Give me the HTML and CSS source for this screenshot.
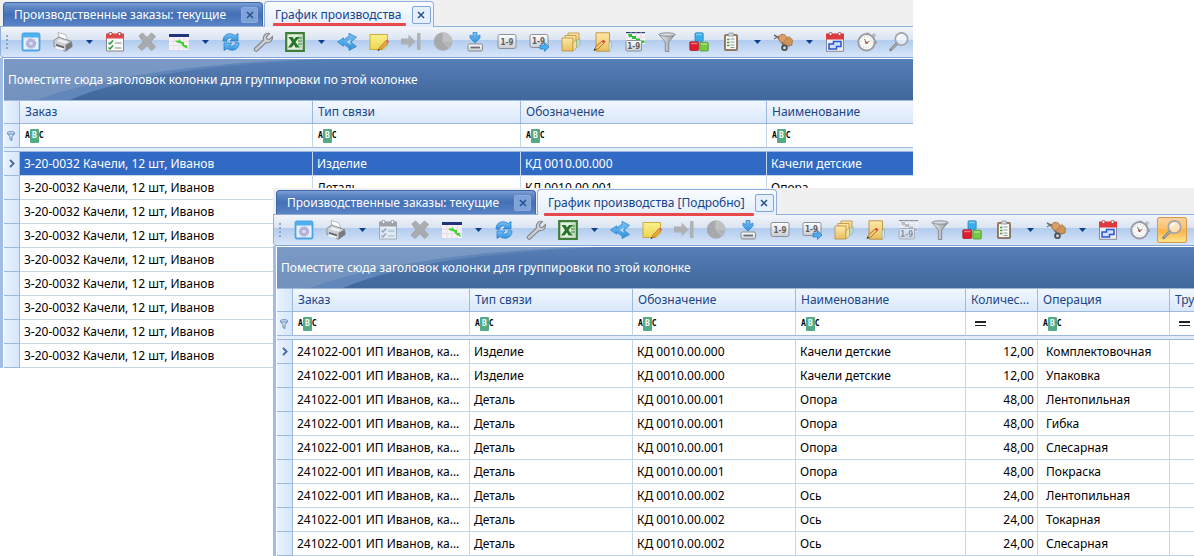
FILE: index.html
```html
<!DOCTYPE html>
<html lang="ru">
<head>
<meta charset="utf-8">
<title>График производства</title>
<link rel="stylesheet" href="styles.css">
</head>
<body>
<svg class="sprite" aria-hidden="true">
  <defs>
    <linearGradient id="g-blue" x1="0" y1="0" x2="0" y2="1"><stop offset="0" stop-color="#7cc4f4"/><stop offset="1" stop-color="#2f8fdc"/></linearGradient>
    <linearGradient id="g-yellow" x1="0" y1="0" x2="0" y2="1"><stop offset="0" stop-color="#fbf08a"/><stop offset="1" stop-color="#ecd552"/></linearGradient>
    <linearGradient id="g-folder" x1="0" y1="0" x2="0" y2="1"><stop offset="0" stop-color="#fde9a8"/><stop offset="1" stop-color="#e9bf60"/></linearGradient>
    <linearGradient id="g-metal" x1="0" y1="0" x2="1" y2="0"><stop offset="0" stop-color="#f4f4f4"/><stop offset="1" stop-color="#8d9095"/></linearGradient>
    <linearGradient id="g-light" x1="0" y1="0" x2="0" y2="1"><stop offset="0" stop-color="#ffffff"/><stop offset="1" stop-color="#c9cdd3"/></linearGradient>
    <linearGradient id="g-panel" x1="0" y1="0" x2="0" y2="1"><stop offset="0" stop-color="#7a99c5"/><stop offset="1" stop-color="#7391bd"/></linearGradient>
    <symbol id="i-window" viewBox="0 0 20 20">
      <rect x="1.500" y="1.500" width="17" height="17" rx="1.500" fill="#e6effa" stroke="#4ba3e6" stroke-width="1.800"/>
      <path d="M1.500 1.500h17v4h-17z" fill="#4fb0f0"/>
      <circle cx="10" cy="11.500" r="4.300" fill="#b4b1da"/><circle cx="10" cy="11.500" r="4.600" fill="none" stroke="#a3a0d0" stroke-width="1.200" stroke-dasharray="1.600 1"/>
      <circle cx="10" cy="11.500" r="1.800" fill="#dcdcf0"/>
    </symbol>
    <symbol id="i-printer" viewBox="0 0 20 20">
      <path d="M5 .5l7.500 2 2.500 6-8.500-2z" fill="#fdfdfd" stroke="#a9adb3" stroke-width=".8"/>
      <path d="M.8 8.500L5.500 5 18.500 9.500l.7 5-6.700 4.800L1 14.500z" fill="#cbced2" stroke="#7e8287" stroke-width=".8"/>
      <path d="M6 7l9 2.800-2.500 1.700-8.500-2.300z" fill="#eef0f2"/>
      <path d="M12.500 13l6-3.500.7 5-6.700 4.800z" fill="#77797d"/>
      <path d="M3 12l8 2.500v2L3 14z" fill="#606469"/>
      <path d="M3 14l8 2.500-1 2-8-2.500z" fill="#f6f6f6"/>
    </symbol>
    <symbol id="i-tasks" viewBox="0 0 20 20">
      <path d="M1.500 3h17v16h-17z" fill="#fafafa" stroke="#8c8484"/>
      <path d="M1 1.500h18V6.500H1z" fill="#e4474a"/>
      <g fill="#fff" stroke="#9b3033"><circle cx="5.500" cy="2" r="1.700"/><circle cx="14.500" cy="2" r="1.700"/></g>
      <path d="M3.500 10.500l1.500 1.500 3-3.500M3.500 15.500L5 17l3-3.500" fill="none" stroke="#2d9b3c" stroke-width="1.500"/>
      <path d="M10 11h6.500M10 16h6.500" stroke="#a8b8a8" stroke-width="1.300"/>
    </symbol>
    <symbol id="i-cross" viewBox="0 0 20 20">
      <path d="M5.500 1L10 5.500 14.500 1 18.500 4.500 13.800 9.800 18.500 15 14.500 18.500 10 13.500 5 18.500 1 15 6 9.800 2 4z" fill="#a5a7ab" stroke="#9b9da1" stroke-linejoin="round"/>
    </symbol>
    <symbol id="i-gantt" viewBox="0 0 20 20">
      <path d="M0 2h20v16H0z" fill="#f5f1f6"/><path d="M0 2h20v3H0z" fill="#20347e"/>
      <path d="M0 9.500h20M0 13.500h20M5 5v13M10 5v13M15 5v13" stroke="#e6d9e2" stroke-width=".8"/>
      <path d="M6 8.500h4V7l3 3h2v3h2.500l1.500 4-5-2.500-2-3-4-1z" fill="#42d234"/>
    </symbol>
    <symbol id="i-refresh" viewBox="0 0 20 20">
      <path d="M2 9C2 2 9 0 14 3.500L17 1.500V9H9l2.500-2.500C8.500 5 6 6.500 5.500 9.500z" fill="url(#g-blue)" stroke="#2a80cc" stroke-width=".8"/>
      <path d="M18 11c0 7-7 9-12 5.500L3 18.500V11H11l-2.500 2.500c3 1.500 5.500 0 6-3z" fill="url(#g-blue)" stroke="#2a80cc" stroke-width=".8"/>
    </symbol>
    <symbol id="i-wrench" viewBox="0 0 20 20">
      <path d="M1.500 16.500L10.500 8c-1-4 2-7.500 6-6.500L13.500 4.500l.5 2.500 2.500.5 3-3c.5 4-3 7-6.500 6L4 19c-1.500 1-3.500-1-2.500-2.500z" fill="#cdd0d5" stroke="#83868c" stroke-width="1.100"/>
    </symbol>
    <symbol id="i-excel" viewBox="0 0 20 20">
      <path d="M1.200 1.200h17.600v17.600H1.200z" fill="#e4f0e0" stroke="#3f7f3a" stroke-width="2.200"/>
      <path d="M13 3.500h4v13h-4z" fill="#b8dab4"/><path d="M13 6h4M13 9h4M13 12h4" stroke="#4a8f46"/>
      <path d="M3.500 5h4L9 7.500 11 5h3.500l-4 5 4 5.500h-4L9 12.500 6.500 15.500H3l4-5.500z" fill="#25742a"/>
    </symbol>
    <symbol id="i-share" viewBox="0 0 20 20">
      <path d="M.5 10l6-4.200V8l5.500-3.800V1.300l7.500 4-5.500 4.700 5.500 4.500-7.500 4V16l-5.500-4v2.200z" fill="url(#g-blue)" stroke="#3288cf" stroke-width=".8"/>
      <path d="M9.500 10L14 7.300l-1 2.700 1 2.700z" fill="#bcd8f2"/>
    </symbol>
    <symbol id="i-note" viewBox="0 0 20 20">
      <path d="M1 2.500h17.500V13l-4.500 4.500H1z" fill="url(#g-yellow)" stroke="#c3a834" stroke-width=".9"/>
      <path d="M9 18.500l2-3.500 6-6.500 2 2-6.500 6.500z" fill="#f0a94a" stroke="#a8661f" stroke-width=".7"/><path d="M17 8.500l1-1 2 2-1 1z" fill="#e25560"/><path d="M8.500 19l1-2 1.200 1z" fill="#333"/>
    </symbol>
    <symbol id="i-next" viewBox="0 0 20 20">
      <path d="M0 6.500h7.500V2.500l7 7-7 7v-4H0zM16 1h3.500v17H16z" fill="#abadb1"/>
    </symbol>
    <symbol id="i-pie" viewBox="0 0 20 20">
      <circle cx="10" cy="9.500" r="9.300" fill="#a3a5a9"/><path d="M10 9.500V.5a9 9 0 0 1 9 9z" fill="#bcbec2"/><path d="M10 9.500h9a9 9 0 0 1-3 6.500z" fill="#b0b2b6"/><path d="M10 .5v9h9M10 9.500l6 6.500" fill="none" stroke="#c6c8cc" stroke-width=".7"/>
    </symbol>
    <symbol id="i-import" viewBox="0 0 20 20">
      <path d="M8 .5h4v4l3-1.500v3l-5 5-5-5V3l3 1.500z" fill="url(#g-blue)" stroke="#2a80cc" stroke-width=".7"/>
      <rect x="3" y="12" width="14.500" height="7" rx="1.500" fill="url(#g-light)" stroke="#858a91"/><path d="M5.500 15.500h9.500" stroke="#6b6f75" stroke-width="1.800"/>
    </symbol>
    <symbol id="i-num" viewBox="0 0 20 20">
      <rect x="1" y="2.500" width="18" height="14" rx="1.800" fill="url(#g-light)" stroke="#8d9299"/>
      <text x="10" y="12.500" class="num-label">1-9</text>
    </symbol>
    <symbol id="i-num-go" viewBox="0 0 20 20">
      <rect x="1" y="2.500" width="18" height="13" rx="1.800" fill="url(#g-light)" stroke="#8d9299"/>
      <text x="9.500" y="12" class="num-label">1-9</text>
      <path d="M11 13h4.500v-2.500L20 15l-4.500 4.500V17H11z" fill="#4aaef0" stroke="#2878bd" stroke-width=".7"/>
    </symbol>
    <symbol id="i-folders" viewBox="0 0 20 20">
      <g fill="url(#g-folder)" stroke="#b98e3b" stroke-width=".8"><path d="M7 1h11v11H7z"/><path d="M4 3.500h11V15H4z"/><path d="M1 6h11v13H1z"/></g>
      <path d="M12 10.500l3.500-2.500v7.500L12 19z" fill="#f2e0a0" stroke="#b98e3b" stroke-width=".6"/><path d="M15.500 8.500L19 6.500v6.500l-3.500 3z" fill="#b8dcd0" stroke="#90a676" stroke-width=".5"/>
    </symbol>
    <symbol id="i-folder-edit" viewBox="0 0 20 20">
      <path d="M3 .8h13.500v18.400H3z" fill="url(#g-folder)" stroke="#b98e3b" stroke-width=".9"/>
      <path d="M16 10.500l2.500-1v7L16 19z" fill="#cfe9e3" stroke="#8fa89f" stroke-width=".6"/>
      <path d="M1.500 17.500l1.500-3 6-5.500 2 2-6 6z" fill="#f6c46a" stroke="#8b5a1f" stroke-width=".7"/><path d="M8.800 9l1.700-1.300 2 2L11 11.200z" fill="#e0433e"/><path d="M.5 19l1-2.500 1.700 1.500z" fill="#333"/>
    </symbol>
    <symbol id="i-gantt-num" viewBox="0 0 20 20">
      <path d="M1 0h19v12H1z" fill="#fbf6fb"/><path d="M1 0h19v1.200H1z" fill="#27406b"/>
      <path d="M1 5h19M6 0v8M11 0v8M16 0v12" stroke="#dfcbdc" stroke-width=".7"/>
      <path d="M3 2h4v2h4v2.500h4v2h4.500V11h-4.500V9h-4V7H7V5H4z" fill="#24c42e"/>
      <rect x="1" y="8.500" width="15.500" height="10.500" rx="1" fill="url(#g-light)" stroke="#8d9299"/>
      <text x="8.700" y="16.500" class="num-label">1-9</text>
    </symbol>
    <symbol id="i-funnel" viewBox="0 0 20 20">
      <path d="M2 2.500L8.300 10v9.500h3.400V10L18 2.500z" fill="url(#g-metal)" stroke="#777b81" stroke-width=".8"/><ellipse cx="10" cy="2.500" rx="8" ry="1.700" fill="#d8dade" stroke="#777b81" stroke-width=".8"/>
    </symbol>
    <symbol id="i-cubes" viewBox="0 0 20 20">
      <rect x="6" y=".8" width="8.200" height="8.500" rx="1" fill="#38aeea" stroke="#1c7eb9" stroke-width=".7"/>
      <rect x=".8" y="9.800" width="8.800" height="8.700" rx="1" fill="#dd1e2d" stroke="#a30f1c" stroke-width=".7"/>
      <rect x="10.800" y="10.300" width="8.500" height="8.700" rx="1" fill="#75cb42" stroke="#468f22" stroke-width=".7"/>
      <path d="M7 2.500h6M2 11.500h6.500M12 12h6" stroke="#fff" stroke-opacity=".4" stroke-width="1.400"/>
    </symbol>
    <symbol id="i-clipboard" viewBox="0 0 20 20">
      <rect x="3.500" y="2.500" width="13" height="16" rx="1" fill="#9b7c5f" stroke="#715439" stroke-width=".6"/><path d="M5 4h10v13H5z" fill="#f8faf7"/>
      <path d="M7 4L8 1h4l1 3z" fill="#d5d7d9" stroke="#84878a" stroke-width=".7"/>
      <path d="M6 7.500h2.500M6 10.500h2.500M6 13.500h2.500" stroke="#4a9a4c" stroke-width="1.600"/><path d="M9.500 7h4M9.500 10h4M9.500 13h4M9.500 15.500h4" stroke="#90989c"/>
    </symbol>
    <symbol id="i-cart" viewBox="0 0 20 20">
      <path d="M1 3l3.500 2 7 9" fill="none" stroke="#6d6f72" stroke-width="1.600"/><path d="M1 7l5-3" stroke="#6d6f72" stroke-width="1.200"/>
      <ellipse cx="10" cy="6.500" rx="4.500" ry="4" transform="rotate(35 10 6.500)" fill="#dba066" stroke="#9c6a38" stroke-width=".7"/>
      <path d="M10 10.500l6-6 3.500 3.500-.5 5-5 1.500z" fill="#cf9458" stroke="#9c6a38" stroke-width=".7"/>
      <circle cx="11.500" cy="15.800" r="3.300" fill="#4c4e50"/><circle cx="11.500" cy="15.800" r="1.500" fill="#d3d5d7"/><path d="M14 15l3-2" stroke="#888" stroke-width="1.500"/>
    </symbol>
    <symbol id="i-calendar" viewBox="0 0 20 20">
      <path d="M1.500 3h17v16.300h-17z" fill="#eceef6" stroke="#8a8a9c"/><path d="M1 1.500h18v6H1z" fill="#e2393c"/>
      <g fill="#fff" stroke="#9b3033" stroke-width=".8"><circle cx="5.500" cy="2" r="1.600"/><circle cx="14.500" cy="2" r="1.600"/></g>
      <path d="M4 12h4.500V9.500H16v5h-4.500V17H4z" fill="#d2defd" stroke="#2858cc" stroke-width="1.500"/>
    </symbol>
    <symbol id="i-stopwatch" viewBox="0 0 20 20">
      <path d="M14 4l2.500-3 3 2-2.500 3z" fill="#b9bcc1"/><path d="M9 1.500h3M19 9v3" stroke="#999" stroke-width="1.500"/>
      <circle cx="9.500" cy="10.300" r="8.200" fill="#f9f9f8" stroke="#9b9ea3" stroke-width="2"/>
      <circle cx="9.500" cy="10.300" r="5.500" fill="none" stroke="#aaa" stroke-dasharray=".6 2.300"/>
      <path d="M9.500 11.500l-2-4.500M9.500 11l3-2" stroke="#666" stroke-width=".9"/><circle cx="9.500" cy="10.700" r="1.300" fill="#b65252"/>
    </symbol>
    <symbol id="i-search" viewBox="0 0 20 20">
      <path d="M8 11.500L1.700 17.800" stroke="#83868b" stroke-width="3" stroke-linecap="round"/><path d="M7.500 12L2 17.500" stroke="#c8cace"/>
      <circle cx="12.500" cy="7" r="6.200" fill="#fff" fill-opacity=".55" stroke="#a1a5ab" stroke-width="1.700"/><path d="M9 6.500a4 4 0 0 1 3.500-3" stroke="#fff" stroke-width="1.300" fill="none"/>
    </symbol>
    <symbol id="i-caret" viewBox="0 0 7 4"><path d="M0 0h7L3.500 4z" fill="#0f3f8c"/></symbol>
    <symbol id="i-close" viewBox="0 0 8 8"><path d="M1 1l6 6M7 1L1 7" stroke="currentColor" stroke-width="1.500"/></symbol>
    <symbol id="i-filter" viewBox="0 0 8 10"><path d="M.5 1.500v1L3 5.500v3L5 9.500v-4l2.500-3v-1c0-1-7-1-7 0zm0 1.500h7" fill="none" stroke="#6385b5"/></symbol>
    <symbol id="i-row" viewBox="0 0 6 9"><path d="M1 .8l3.600 3.700L1 8.200" fill="none" stroke="#46699f" stroke-width="1.900"/></symbol>
    <symbol id="i-swoosh" viewBox="0 0 320 41">
      <path d="M0 0h320C235 5 135 12 66 41H0z" fill="#6086ba"/>
      <path d="M0 0h320C225 2 105 14 33 41H0z" fill="url(#g-panel)"/>
    </symbol>
  </defs>
</svg>

<main class="desktop">
  <section class="window window-back" aria-label="График производства">
    <nav class="tabs">
      <div class="tab"><button class="tab-title">Производственные заказы: текущие</button><button class="tab-close" aria-label="Закрыть"><svg><use href="#i-close"/></svg></button></div>
      <div class="tab tab-active"><button class="tab-title marked">График производства</button><button class="tab-close" aria-label="Закрыть"><svg><use href="#i-close"/></svg></button></div>
    </nav>
    <div class="toolbar" role="toolbar">
      <span class="grip"></span>
      <button class="tool" aria-label="Окно"><svg><use href="#i-window"/></svg></button>
      <button class="tool" aria-label="Печать"><svg><use href="#i-printer"/></svg></button>
      <button class="drop" aria-label="Параметры печати"><svg><use href="#i-caret"/></svg></button>
      <button class="tool" aria-label="Задачи"><svg><use href="#i-tasks"/></svg></button>
      <button class="tool" aria-label="Удалить" disabled><svg><use href="#i-cross"/></svg></button>
      <button class="tool" aria-label="Диаграмма"><svg><use href="#i-gantt"/></svg></button>
      <button class="drop" aria-label="Виды диаграммы"><svg><use href="#i-caret"/></svg></button>
      <button class="tool" aria-label="Обновить"><svg><use href="#i-refresh"/></svg></button>
      <button class="tool" aria-label="Настройка"><svg><use href="#i-wrench"/></svg></button>
      <button class="tool" aria-label="Excel"><svg><use href="#i-excel"/></svg></button>
      <button class="drop" aria-label="Варианты экспорта"><svg><use href="#i-caret"/></svg></button>
      <button class="tool" aria-label="Связи"><svg><use href="#i-share"/></svg></button>
      <button class="tool" aria-label="Заметка"><svg><use href="#i-note"/></svg></button>
      <button class="tool" aria-label="Далее" disabled><svg><use href="#i-next"/></svg></button>
      <button class="tool" aria-label="Доля" disabled><svg><use href="#i-pie"/></svg></button>
      <button class="tool" aria-label="Загрузить"><svg><use href="#i-import"/></svg></button>
      <button class="tool" aria-label="Нумерация"><svg><use href="#i-num"/></svg></button>
      <button class="tool" aria-label="Перенумеровать"><svg><use href="#i-num-go"/></svg></button>
      <button class="tool" aria-label="Папки"><svg><use href="#i-folders"/></svg></button>
      <button class="tool" aria-label="Изменить папку"><svg><use href="#i-folder-edit"/></svg></button>
      <button class="tool" aria-label="Номера на диаграмме"><svg><use href="#i-gantt-num"/></svg></button>
      <button class="tool" aria-label="Фильтр"><svg><use href="#i-funnel"/></svg></button>
      <button class="tool" aria-label="Состав"><svg><use href="#i-cubes"/></svg></button>
      <button class="tool" aria-label="Список"><svg><use href="#i-clipboard"/></svg></button>
      <button class="drop" aria-label="Варианты списка"><svg><use href="#i-caret"/></svg></button>
      <button class="tool" aria-label="Материалы"><svg><use href="#i-cart"/></svg></button>
      <button class="drop" aria-label="Варианты материалов"><svg><use href="#i-caret"/></svg></button>
      <button class="tool" aria-label="Календарь"><svg><use href="#i-calendar"/></svg></button>
      <button class="tool" aria-label="Время"><svg><use href="#i-stopwatch"/></svg></button>
      <button class="tool" aria-label="Поиск"><svg><use href="#i-search"/></svg></button>
    </div>
    <div class="grid">
      <div class="group-panel"><svg class="swoosh"><use href="#i-swoosh"/></svg><span>Поместите сюда заголовок колонки для группировки по этой колонке</span></div>
      <table>
        <colgroup><col class="c-mark"><col class="c-293"><col class="c-208"><col class="c-246"><col></colgroup>
        <thead>
          <tr><th></th><th>Заказ</th><th>Тип связи</th><th>Обозначение</th><th>Наименование</th></tr>
          <tr class="filters"><td><svg class="filter-icon"><use href="#i-filter"/></svg></td><td><button class="abc">A<b>B</b>C</button></td><td><button class="abc">A<b>B</b>C</button></td><td><button class="abc">A<b>B</b>C</button></td><td><button class="abc">A<b>B</b>C</button></td></tr>
          <tr class="divider"><td colspan="5"></td></tr>
        </thead>
        <tbody>
          <tr class="selected"><td><svg class="row-icon"><use href="#i-row"/></svg></td><td>3-20-0032 Качели, 12 шт, Иванов</td><td>Изделие</td><td>КД 0010.00.000</td><td>Качели детские</td></tr>
          <tr><td></td><td>3-20-0032 Качели, 12 шт, Иванов</td><td>Деталь</td><td>КД 0010.00.001</td><td>Опора</td></tr>
          <tr><td></td><td>3-20-0032 Качели, 12 шт, Иванов</td><td></td><td></td><td></td></tr>
          <tr><td></td><td>3-20-0032 Качели, 12 шт, Иванов</td><td></td><td></td><td></td></tr>
          <tr><td></td><td>3-20-0032 Качели, 12 шт, Иванов</td><td></td><td></td><td></td></tr>
          <tr><td></td><td>3-20-0032 Качели, 12 шт, Иванов</td><td></td><td></td><td></td></tr>
          <tr><td></td><td>3-20-0032 Качели, 12 шт, Иванов</td><td></td><td></td><td></td></tr>
          <tr><td></td><td>3-20-0032 Качели, 12 шт, Иванов</td><td></td><td></td><td></td></tr>
          <tr><td></td><td>3-20-0032 Качели, 12 шт, Иванов</td><td></td><td></td><td></td></tr>
        </tbody>
      </table>
    </div>
  </section>

  <section class="window window-front" aria-label="График производства [Подробно]">
    <nav class="tabs">
      <div class="tab"><button class="tab-title">Производственные заказы: текущие</button><button class="tab-close" aria-label="Закрыть"><svg><use href="#i-close"/></svg></button></div>
      <div class="tab tab-active"><button class="tab-title marked marked-low">График производства [Подробно]</button><button class="tab-close" aria-label="Закрыть"><svg><use href="#i-close"/></svg></button></div>
    </nav>
    <div class="toolbar" role="toolbar">
      <span class="grip"></span>
      <button class="tool" aria-label="Окно"><svg><use href="#i-window"/></svg></button>
      <button class="tool" aria-label="Печать"><svg><use href="#i-printer"/></svg></button>
      <button class="drop" aria-label="Параметры печати"><svg><use href="#i-caret"/></svg></button>
      <button class="tool" aria-label="Задачи" disabled><svg><use href="#i-tasks"/></svg></button>
      <button class="tool" aria-label="Удалить" disabled><svg><use href="#i-cross"/></svg></button>
      <button class="tool" aria-label="Диаграмма"><svg><use href="#i-gantt"/></svg></button>
      <button class="drop" aria-label="Виды диаграммы"><svg><use href="#i-caret"/></svg></button>
      <button class="tool" aria-label="Обновить"><svg><use href="#i-refresh"/></svg></button>
      <button class="tool" aria-label="Настройка"><svg><use href="#i-wrench"/></svg></button>
      <button class="tool" aria-label="Excel"><svg><use href="#i-excel"/></svg></button>
      <button class="drop" aria-label="Варианты экспорта"><svg><use href="#i-caret"/></svg></button>
      <button class="tool" aria-label="Связи"><svg><use href="#i-share"/></svg></button>
      <button class="tool" aria-label="Заметка"><svg><use href="#i-note"/></svg></button>
      <button class="tool" aria-label="Далее" disabled><svg><use href="#i-next"/></svg></button>
      <button class="tool" aria-label="Доля" disabled><svg><use href="#i-pie"/></svg></button>
      <button class="tool" aria-label="Загрузить"><svg><use href="#i-import"/></svg></button>
      <button class="tool" aria-label="Нумерация"><svg><use href="#i-num"/></svg></button>
      <button class="tool" aria-label="Перенумеровать"><svg><use href="#i-num-go"/></svg></button>
      <button class="tool" aria-label="Папки"><svg><use href="#i-folders"/></svg></button>
      <button class="tool" aria-label="Изменить папку"><svg><use href="#i-folder-edit"/></svg></button>
      <button class="tool" aria-label="Номера на диаграмме" disabled><svg><use href="#i-gantt-num"/></svg></button>
      <button class="tool" aria-label="Фильтр"><svg><use href="#i-funnel"/></svg></button>
      <button class="tool" aria-label="Состав"><svg><use href="#i-cubes"/></svg></button>
      <button class="tool" aria-label="Список"><svg><use href="#i-clipboard"/></svg></button>
      <button class="drop" aria-label="Варианты списка"><svg><use href="#i-caret"/></svg></button>
      <button class="tool" aria-label="Материалы"><svg><use href="#i-cart"/></svg></button>
      <button class="drop" aria-label="Варианты материалов"><svg><use href="#i-caret"/></svg></button>
      <button class="tool" aria-label="Календарь"><svg><use href="#i-calendar"/></svg></button>
      <button class="tool" aria-label="Время"><svg><use href="#i-stopwatch"/></svg></button>
      <button class="tool tool-on" aria-label="Поиск" aria-pressed="true"><svg><use href="#i-search"/></svg></button>
    </div>
    <div class="grid">
      <div class="group-panel"><svg class="swoosh"><use href="#i-swoosh"/></svg><span>Поместите сюда заголовок колонки для группировки по этой колонке</span></div>
      <table>
        <colgroup><col class="c-mark"><col class="c-177"><col class="c-163"><col class="c-163"><col class="c-170"><col class="c-72"><col class="c-132"><col></colgroup>
        <thead>
          <tr><th></th><th>Заказ</th><th>Тип связи</th><th>Обозначение</th><th>Наименование</th><th>Количес...</th><th>Операция</th><th class="cut">Тру</th></tr>
          <tr class="filters"><td><svg class="filter-icon"><use href="#i-filter"/></svg></td><td><button class="abc">A<b>B</b>C</button></td><td><button class="abc">A<b>B</b>C</button></td><td><button class="abc">A<b>B</b>C</button></td><td><button class="abc">A<b>B</b>C</button></td><td><button class="equals" aria-label="Равно"></button></td><td><button class="abc">A<b>B</b>C</button></td><td><button class="equals" aria-label="Равно"></button></td></tr>
          <tr class="divider"><td colspan="8"></td></tr>
        </thead>
        <tbody>
          <tr><td><svg class="row-icon"><use href="#i-row"/></svg></td><td>241022-001 ИП Иванов, ка...</td><td>Изделие</td><td>КД 0010.00.000</td><td>Качели детские</td><td class="qty">12,00</td><td class="op">Комплектовочная</td><td></td></tr>
          <tr><td></td><td>241022-001 ИП Иванов, ка...</td><td>Изделие</td><td>КД 0010.00.000</td><td>Качели детские</td><td class="qty">12,00</td><td class="op">Упаковка</td><td></td></tr>
          <tr><td></td><td>241022-001 ИП Иванов, ка...</td><td>Деталь</td><td>КД 0010.00.001</td><td>Опора</td><td class="qty">48,00</td><td class="op">Лентопильная</td><td></td></tr>
          <tr><td></td><td>241022-001 ИП Иванов, ка...</td><td>Деталь</td><td>КД 0010.00.001</td><td>Опора</td><td class="qty">48,00</td><td class="op">Гибка</td><td></td></tr>
          <tr><td></td><td>241022-001 ИП Иванов, ка...</td><td>Деталь</td><td>КД 0010.00.001</td><td>Опора</td><td class="qty">48,00</td><td class="op">Слесарная</td><td></td></tr>
          <tr><td></td><td>241022-001 ИП Иванов, ка...</td><td>Деталь</td><td>КД 0010.00.001</td><td>Опора</td><td class="qty">48,00</td><td class="op">Покраска</td><td></td></tr>
          <tr><td></td><td>241022-001 ИП Иванов, ка...</td><td>Деталь</td><td>КД 0010.00.002</td><td>Ось</td><td class="qty">24,00</td><td class="op">Лентопильная</td><td></td></tr>
          <tr><td></td><td>241022-001 ИП Иванов, ка...</td><td>Деталь</td><td>КД 0010.00.002</td><td>Ось</td><td class="qty">24,00</td><td class="op">Токарная</td><td></td></tr>
          <tr><td></td><td>241022-001 ИП Иванов, ка...</td><td>Деталь</td><td>КД 0010.00.002</td><td>Ось</td><td class="qty">24,00</td><td class="op">Слесарная</td><td></td></tr>
        </tbody>
      </table>
    </div>
  </section>
</main>
</body>
</html>
```
FILE: styles.css
```css
* { box-sizing: border-box; }

body {
  margin: 0;
  background: #fff;
  color: #000;
  font: 12px/16px "Noto Sans", "Open Sans", sans-serif;
}

button {
  margin: 0;
  padding: 0;
  border: 0;
  background: none;
  color: inherit;
  font: inherit;
}

svg { display: block; }

.sprite {
  position: absolute;
  width: 0;
  height: 0;
}

/* Overlapping windows on the desktop */
.desktop {
  position: relative;
  min-height: 100vh;
  overflow: hidden;
}

.window {
  position: absolute;
  background: #fff;
  overflow: hidden;
}

.window-back {
  top: 0;
  left: 0;
  right: 281px;
}

.window-front {
  top: 188px;
  left: 273px;
  right: 0;
}

/* Tabs */
.tabs {
  display: flex;
  align-items: flex-end;
  gap: 1px;
  height: 27px;
  padding-left: 3px;
  background: #f0f0f0;
  border-bottom: 1px solid #8fb0dc;
}

.tab {
  display: flex;
  align-items: center;
  justify-content: space-between;
  gap: 10px;
  min-width: 260px;
  height: 24px;
  padding: 0 4px 0 10px;
  border: 1px solid #3c66a8;
  border-bottom: 0;
  border-radius: 4px 4px 0 0;
  background: linear-gradient(#7d9fd4, #5c84c3 20%, #4470b5 50%, #5a84c6);
  color: #fff;
}

.tab-active {
  position: relative;
  min-width: 0;
  height: 26px;
  margin-bottom: -1px;
  padding: 0 2px 0 10px;
  border-color: #8fb0dc;
  background: linear-gradient(#fafcff, #e3eefc);
  color: #15428b;
}

.tab-close {
  display: flex;
  align-items: center;
  justify-content: center;
  width: 17px;
  height: 16px;
  border: 1px solid #8aabdb;
  border-radius: 2px;
  background: #7fa3d8;
  color: #24508f;
}

.tab-active .tab-close {
  width: 19px;
  height: 18px;
  background: #e6f0fd;
  border-color: #84a4d4;
}

.tab-close svg { width: 8px; height: 8px; }

.marked { position: relative; }

.marked::after {
  content: "";
  position: absolute;
  left: -2px;
  right: -4px;
  bottom: -3px;
  height: 3px;
  border-radius: 1px;
  background: #e9484d;
}

.marked-low::after {
  left: -4px;
  right: -9px;
  bottom: -5px;
}

/* Toolbar */
.toolbar {
  display: flex;
  align-items: center;
  height: 31px;
  padding-left: 5px;
  border-left: 1px solid #8fb0dc;
  border-bottom: 1px solid #7fa3d4;
  border-radius: 0 0 0 4px;
  background: linear-gradient(#f3f5f9, #dae4f2 42%, #b2ccee 44%, #d8e6f9);
}

.grip {
  flex: none;
  width: 2px;
  height: 15px;
  margin-right: 7px;
  background: repeating-linear-gradient(#8fa7cb 0 2px, transparent 2px 4px);
}

.tool, .drop {
  flex: none;
  display: flex;
  align-items: center;
  justify-content: center;
  width: 32px;
  height: 26px;
}

.tool svg { width: 20px; height: 20px; }
.drop { width: 20px; }
.drop svg { width: 7px; height: 4px; }
.tool:disabled svg { filter: grayscale(1); opacity: .9; }
.tool:disabled use[href="#i-tasks"], .tool:disabled use[href="#i-gantt-num"] { opacity: .6; }

.tool-on {
  width: 30px;
  margin: 0 1px;
  border: 1px solid #d59a4c;
  border-radius: 2px;
  background: linear-gradient(#fbd29c, #fcc270 45%, #fdb13f 50%, #fee48c);
}

.num-label {
  font: bold 8px "DejaVu Sans Condensed", sans-serif;
  text-anchor: middle;
  fill: #5b5e63;
}

/* Grid */
.grid {
  border-left: 3px solid #9fbde5;
  padding: 1px 0 0 1px;
}

.group-panel {
  position: relative;
  display: flex;
  align-items: center;
  height: 41px;
  padding-left: 4px;
  background: linear-gradient(#567fb6, #41679c);
  color: #fff;
}

.group-panel span { position: relative; }

.swoosh {
  position: absolute;
  top: 0;
  left: 0;
  width: 320px;
  height: 41px;
}

table {
  width: 100%;
  table-layout: fixed;
  border-collapse: separate;
  border-spacing: 0;
}

.c-mark { width: 16px; }
.c-293 { width: 293px; }
.c-208 { width: 208px; }
.c-246 { width: 246px; }
.c-177 { width: 177px; }
.c-163 { width: 163px; }
.c-170 { width: 170px; }
.c-72 { width: 72px; }
.c-132 { width: 132px; }

th, td {
  height: 24px;
  padding: 0 4px;
  border-right: 1px solid #c5d7ea;
  border-bottom: 1px solid #c5d7e8;
  text-align: left;
  font-weight: normal;
  white-space: nowrap;
  overflow: hidden;
}

th {
  padding: 0 5px;
  border-top: 1px solid #c4daf5;
  border-color: #9fb9dc;
  background: linear-gradient(#f1f7ff, #d9e8fb);
  color: #1c4587;
}

tr > :last-child { border-right: 0; }
th.cut { padding-right: 0; }

tr > :first-child {
  padding: 0 3px;
  border-right: 1px solid #9fb9dc;
  border-bottom-color: #9fb9dc;
  background: linear-gradient(90deg, #e9f3ff, #d6e6fb);
}

.filters td { padding: 0 5px; border-bottom-color: #9fb9dc; }
.filters td:first-child { padding: 0 3px; }

tr.divider td {
  height: 4px;
  padding: 0;
  border-right: 0;
  border-bottom: 1px solid #9fb9dc;
  background: #e3eefc;
}

.selected td:not(:first-child) {
  background: #316ac5;
  color: #fff;
}

td.qty { padding-right: 3px; text-align: right; }
td.op { padding-left: 8px; }

.filter-icon { width: 8px; height: 10px; }
.row-icon { width: 6px; height: 9px; margin-left: 2px; }

.abc {
  display: flex;
  align-items: center;
  font: bold 8px/14px "DejaVu Sans Mono", monospace;
}

.abc b {
  width: 9px;
  border-radius: 1px;
  background: #52ab84;
  color: #fff;
  text-align: center;
}

.equals {
  display: block;
  width: 11px;
  height: 5px;
  margin-left: 4px;
  border: solid #222;
  border-width: 2px 0 1px;
}
```
